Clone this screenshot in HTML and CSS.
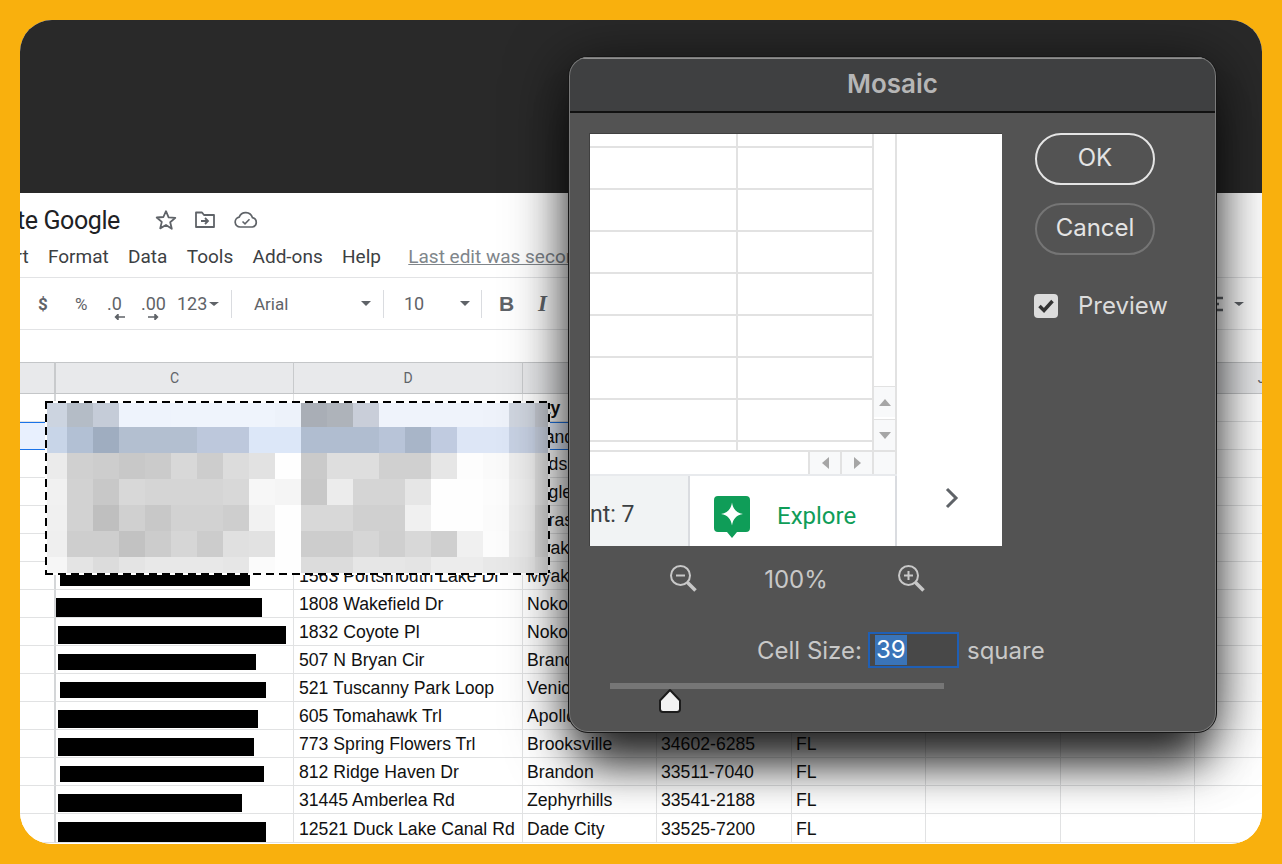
FILE: index.html
```html
<!DOCTYPE html>
<html lang="en">
<head>
    <meta charset="UTF-8">
    <title>Mosaic</title>
    <link rel="stylesheet" href="styles.css">
</head>
<body>
    <div class="app">
        <div class="top-band"></div>

        <div class="sheet">
            <div class="title-row">
                <span class="doc-title">te Google</span>
                <svg class="title-icon star" width="24" height="24" viewBox="0 0 24 24"><path d="M12 3.2l2.6 6.2 6.7.5-5.1 4.4 1.6 6.5L12 17.000l-5.800 3.400 1.600-6.500-5.100-4.400 6.700-.5z" fill="none" stroke="#5f6368" stroke-width="1.800" stroke-linejoin="round"/></svg>
                <svg class="title-icon folder" width="24" height="24" viewBox="0 0 24 24"><path d="M3 19V4.500h6l2 2.500h10v12z" fill="none" stroke="#5f6368" stroke-width="1.800" stroke-linejoin="round"/><path d="M8 13h6.500M12 10l3 3-3 3" fill="none" stroke="#5f6368" stroke-width="1.800"/></svg>
                <svg class="title-icon cloud" width="26" height="24" viewBox="0 0 26 24"><path d="M7 19a5 5 0 0 1-.8-9.900A7 7 0 0 1 19.400 9.600 4.800 4.800 0 0 1 19.500 19z" fill="none" stroke="#5f6368" stroke-width="1.700"/><path d="M9.500 13.500l2.500 2.300 4.500-4.500" fill="none" stroke="#5f6368" stroke-width="1.600"/></svg>
            </div>

            <div class="menu-row">
                <span class="menu-cut">Insert</span>
                <span>Format</span>
                <span>Data</span>
                <span>Tools</span>
                <span>Add-ons</span>
                <span>Help</span>
                <span class="last-edit">Last edit was seconds ago</span>
            </div>

            <div class="toolbar">
                <span class="tool tool-dollar">$</span>
                <span class="tool tool-percent">%</span>
                <span class="tool tool-dec">.0<svg width="12" height="6" viewBox="0 0 12 6"><path d="M11 3H2M4 .5L1.500 3 4 5.500z" stroke="#5f6368" stroke-width="1.500" fill="#5f6368"/></svg></span>
                <span class="tool tool-inc">.00<svg width="12" height="6" viewBox="0 0 12 6"><path d="M1 3h9M8 .5L10.500 3 8 5.500z" stroke="#5f6368" stroke-width="1.500" fill="#5f6368"/></svg></span>
                <span class="tool tool-num">123<i class="caret caret-small"></i></span>
                <i class="divider"></i>
                <span class="tool tool-font">Arial<i class="caret"></i></span>
                <i class="divider"></i>
                <span class="tool tool-size">10<i class="caret"></i></span>
                <i class="divider"></i>
                <span class="tool tool-bold">B</span>
                <span class="tool tool-italic">I</span>
                <span class="tool tool-align">
                    <svg width="16" height="18" viewBox="0 0 16 18"><path d="M0 3h16M0 9h12M0 15h16" stroke="#5f6368" stroke-width="2.500"/></svg>
                    <i class="caret caret-small"></i>
                </span>
            </div>

            <div class="formula-bar"></div>

            <table class="grid">
                <colgroup>
                    <col class="col-rows">
                    <col class="col-c">
                    <col class="col-d">
                    <col class="col-e">
                    <col class="col-f">
                    <col class="col-g">
                    <col class="col-h">
                    <col class="col-i">
                    <col class="col-j">
                </colgroup>
                <thead>
                    <tr><th></th><th>C</th><th>D</th><th>E</th><th>F</th><th>G</th><th>H</th><th>I</th><th>J</th></tr>
                </thead>
                <tbody>
                    <tr><td></td><td></td><td></td><td><b>City</b></td><td></td><td></td><td></td><td></td><td></td></tr>
                    <tr class="selected"><td></td><td></td><td></td><td>Brandon</td><td></td><td></td><td></td><td></td><td></td></tr>
                    <tr><td></td><td></td><td></td><td>Eads</td><td></td><td></td><td></td><td></td><td></td></tr>
                    <tr><td></td><td></td><td></td><td>Eagle</td><td></td><td></td><td></td><td></td><td></td></tr>
                    <tr><td></td><td></td><td></td><td>Sarasota</td><td></td><td></td><td></td><td></td><td></td></tr>
                    <tr><td></td><td></td><td></td><td>Myakka City</td><td></td><td></td><td></td><td></td><td></td></tr>
                    <tr><td></td><td class="hidden-name"><span class="redact" style="margin:12px 0 0 4px;width:190px;height:12px"></span></td><td>1563 Portsmouth Lake Dr</td><td>Myakka City</td><td></td><td></td><td></td><td></td><td></td></tr>
                    <tr><td></td><td class="hidden-name"><span class="redact" style="margin:8px 0 0 0;width:206px;height:19px"></span></td><td>1808 Wakefield Dr</td><td>Nokomis</td><td></td><td></td><td></td><td></td><td></td></tr>
                    <tr><td></td><td class="hidden-name"><span class="redact" style="margin:8px 0 0 2px;width:228px;height:18px"></span></td><td>1832 Coyote Pl</td><td>Nokomis</td><td></td><td></td><td></td><td></td><td></td></tr>
                    <tr><td></td><td class="hidden-name"><span class="redact" style="margin:8px 0 0 2px;width:198px;height:16px"></span></td><td>507 N Bryan Cir</td><td>Brandon</td><td></td><td></td><td></td><td></td><td></td></tr>
                    <tr><td></td><td class="hidden-name"><span class="redact" style="margin:8px 0 0 4px;width:206px;height:16px"></span></td><td>521 Tuscanny Park Loop</td><td>Venice</td><td></td><td></td><td></td><td></td><td></td></tr>
                    <tr><td></td><td class="hidden-name"><span class="redact" style="margin:8px 0 0 2px;width:200px;height:18px"></span></td><td>605 Tomahawk Trl</td><td>Apollo Beach</td><td></td><td></td><td></td><td></td><td></td></tr>
                    <tr><td></td><td class="hidden-name"><span class="redact" style="margin:8px 0 0 2px;width:196px;height:18px"></span></td><td>773 Spring Flowers Trl</td><td>Brooksville</td><td>34602-6285</td><td>FL</td><td></td><td></td><td></td></tr>
                    <tr><td></td><td class="hidden-name"><span class="redact" style="margin:8px 0 0 4px;width:204px;height:16px"></span></td><td>812 Ridge Haven Dr</td><td>Brandon</td><td>33511-7040</td><td>FL</td><td></td><td></td><td></td></tr>
                    <tr><td></td><td class="hidden-name"><span class="redact" style="margin:8px 0 0 2px;width:184px;height:18px"></span></td><td>31445 Amberlea Rd</td><td>Zephyrhills</td><td>33541-2188</td><td>FL</td><td></td><td></td><td></td></tr>
                    <tr><td></td><td class="hidden-name"><span class="redact" style="margin:8px 0 0 2px;width:208px;height:20px"></span></td><td>12521 Duck Lake Canal Rd</td><td>Dade City</td><td>33525-7200</td><td>FL</td><td></td><td></td><td></td></tr>
                </tbody>
            </table>
        </div>

        <div class="mosaic" id="mosaic"></div>

        <div class="dialog">
            <div class="dialog-title">Mosaic</div>
            <div class="dialog-body">
                <div class="dialog-left">
                    <div class="preview">
                        <div class="preview-sheet">
                            <div class="preview-top">
                                <div class="preview-cells"></div>
                                <div class="vscroll">
                                    <div class="scroll-btn"><i class="tri tri-up"></i></div>
                                    <div class="scroll-btn"><i class="tri tri-down"></i></div>
                                </div>
                            </div>
                            <div class="hscroll">
                                <div class="hscroll-btn"><i class="tri tri-left"></i></div>
                                <div class="hscroll-btn"><i class="tri tri-right"></i></div>
                                <div class="hscroll-corner"></div>
                            </div>
                            <div class="preview-tabs">
                                <div class="tab-count"><span>nt: 7</span></div>
                                <div class="tab-explore">
                                    <svg width="36" height="42" viewBox="0 0 36 42"><path d="M4 0h28a4 4 0 0 1 4 4v28a4 4 0 0 1-4 4h-9l-5 6-5-6H4a4 4 0 0 1-4-4V4a4 4 0 0 1 4-4z" fill="#0f9d58"/><path d="M18 6.500c1 6.500 4.500 10.500 11 11.500-6.500 1-10 5-11 11.500-1-6.500-4.500-10.500-11-11.500 6.500-1 10-5 11-11.500z" fill="#fff"/></svg>
                                    <span>Explore</span>
                                </div>
                            </div>
                        </div>
                        <div class="preview-side">
                            <svg width="16" height="22" viewBox="0 0 16 22"><path d="M3 2l9 9-9 9" fill="none" stroke="#5f6368" stroke-width="3"/></svg>
                        </div>
                    </div>

                    <div class="zoom-row">
                        <svg width="30" height="30" viewBox="0 0 30 30"><circle cx="11.500" cy="11.500" r="9.500" fill="none" stroke="#c8c8c8" stroke-width="2"/><path d="M7 11.500h9" stroke="#c8c8c8" stroke-width="2"/><path d="M18.500 18.500l8 8" stroke="#c8c8c8" stroke-width="3.500"/></svg>
                        <span>100%</span>
                        <svg width="30" height="30" viewBox="0 0 30 30"><circle cx="11.500" cy="11.500" r="9.500" fill="none" stroke="#c8c8c8" stroke-width="2"/><path d="M7 11.500h9M11.500 7v9" stroke="#c8c8c8" stroke-width="2"/><path d="M18.500 18.500l8 8" stroke="#c8c8c8" stroke-width="3.500"/></svg>
                    </div>

                    <div class="cell-row">
                        <label>Cell Size:</label>
                        <div class="cell-input"><span>39</span></div>
                        <span>square</span>
                    </div>

                    <div class="slider">
                        <div class="slider-track"></div>
                        <svg class="slider-thumb" width="26" height="26" viewBox="0 0 26 26"><path d="M13 2L23 12.500V21a3 3 0 0 1-3 3H6a3 3 0 0 1-3-3V12.500z" fill="#f2f2f2" stroke="#1c1c1c" stroke-width="2" stroke-linejoin="round"/></svg>
                    </div>
                </div>

                <div class="dialog-right">
                    <button class="btn btn-ok">OK</button>
                    <button class="btn btn-cancel">Cancel</button>
                    <div class="preview-check">
                        <span class="checkbox">
                            <svg width="18" height="16" viewBox="0 0 18 16"><path d="M2.500 8l4.500 4.500L15.500 3" fill="none" stroke="#333" stroke-width="3.500"/></svg>
                        </span>
                        <span>Preview</span>
                    </div>
                </div>
            </div>
        </div>
    </div>

    <script src="script.js"></script>
</body>
</html>
```

FILE: styles.css
```css
* {
    box-sizing: border-box;
    margin: 0;
    padding: 0;
}

html, body {
    width: 1282px;
    height: 864px;
    overflow: hidden;
}

body {
    padding: 20px;
    background-color: #f9b00d;
    font-family: Roboto, sans-serif;
}

.app {
    position: relative;
    height: 824px;
    border-radius: 32px;
    overflow: hidden;
    background-color: #fff;
}

.top-band {
    height: 173px;
    background-color: #292929;
}

/* spreadsheet behind the dialog */

.sheet {
    height: 651px;
    overflow: hidden;
    background-color: #fff;
}

.title-row {
    display: flex;
    align-items: center;
    height: 50px;
    padding-top: 4px;
}

.doc-title {
    width: 135px;
    margin-left: -3px;
    font-size: 25px;
    letter-spacing: -0.4px;
    color: #202124;
}

.title-icon {
    flex: none;
}

.doc-title + .title-icon {
    margin-left: 2px;
}

.star {
    margin-right: 15px;
}

.folder {
    margin-right: 16px;
}

.menu-row {
    display: flex;
    align-items: center;
    gap: 19.300px;
    height: 34px;
    padding-bottom: 8px;
    font-size: 19px;
    color: #3c4043;
    white-space: nowrap;
}

.menu-cut {
    margin-left: -40px;
}

.last-edit {
    margin-left: 8px;
    color: #80868b;
    text-decoration: underline;
}

.toolbar {
    display: flex;
    align-items: center;
    height: 53px;
    padding-right: 18px;
    border-top: 1px solid #e2e3e5;
    border-bottom: 1px solid #e2e3e5;
    color: #5f6368;
    font-size: 17px;
}

.tool {
    display: flex;
    align-items: center;
    height: 24px;
    flex: none;
}

.tool-dollar {
    width: 44px;
    padding-left: 18px;
    font-weight: 700;
}

.tool-percent {
    width: 36px;
    padding-left: 11px;
}

.tool-dec,
.tool-inc {
    position: relative;
    font-size: 18px;
}

.tool-dec {
    width: 33px;
    padding-left: 7px;
}

.tool-inc {
    width: 43px;
    padding-left: 8px;
}

.tool-dec svg,
.tool-inc svg {
    position: absolute;
    top: 22px;
    left: 14px;
}

.tool-num {
    width: 55px;
    padding-left: 1px;
    font-size: 18px;
}

.divider {
    flex: none;
    width: 1px;
    height: 28px;
    background-color: #dadce0;
}

.caret {
    display: block;
    flex: none;
    margin-left: auto;
    border-top: 5px solid #5f6368;
    border-left: 5.500px solid transparent;
    border-right: 5.500px solid transparent;
}

.caret-small {
    margin-left: 2px;
    border-top-width: 4px;
    border-left-width: 5px;
    border-right-width: 5px;
}

.tool-font {
    width: 151px;
    padding: 0 12px 0 22px;
}

.tool-size {
    width: 97px;
    padding: 0 11px 0 20px;
    font-size: 18px;
}

.tool-bold {
    width: 42px;
    padding-left: 17px;
    font-family: "Liberation Sans", sans-serif;
    font-size: 21px;
    font-weight: 700;
}

.tool-italic {
    width: 20px;
    padding-left: 14px;
    font-family: "Liberation Serif", serif;
    font-size: 23px;
    font-style: italic;
    font-weight: 700;
}

.tool-align {
    gap: 9px;
    margin-left: auto;
}

.formula-bar {
    height: 32px;
}

.grid {
    border-collapse: separate;
    border-spacing: 0;
    table-layout: fixed;
    width: 1309px;
    font-family: "Liberation Sans", sans-serif;
    font-size: 17.650px;
    color: #111;
}

.col-rows { width: 36px; }
.col-c { width: 238px; }
.col-d { width: 229px; }
.col-e { width: 134px; }
.col-f { width: 135px; }
.col-g { width: 134px; }
.col-h { width: 135px; }
.col-i { width: 134px; }
.col-j { width: 134px; }

.grid th {
    height: 32px;
    font-family: Roboto, sans-serif;
    font-size: 14px;
    font-weight: 400;
    color: #5f6368;
    background-color: #e8e9eb;
    border-top: 1px solid #c4c6c8;
    border-right: 1px solid #c8cacc;
    border-bottom: 1px solid #c4c6c8;
}

.grid th:first-child {
    border-right-width: 2px;
}

.grid td {
    height: 28px;
    padding: 2px 3px 0 4px;
    border-right: 1px solid #e1e2e3;
    border-bottom: 1px solid #e1e2e3;
    white-space: nowrap;
    overflow: hidden;
    vertical-align: middle;
}

.grid td:nth-child(3) {
    padding-left: 5px;
}

.grid td:first-child {
    border-right: 2px solid #d4d6d8;
    padding: 0;
}

.grid td.hidden-name {
    padding: 0;
    vertical-align: top;
}

.grid .selected td:nth-child(-n+6) {
    background-color: #e8f0fe;
    border-top: 1px solid #1a73e8;
    border-bottom: 1px solid #1a73e8;
}

.redact {
    display: block;
    background-color: #000;
}

/* pixelated selection */

.mosaic {
    position: absolute;
    top: 381px;
    left: 25px;
    display: grid;
    grid-template-columns: 22px repeat(18, 26px) 15px;
    grid-template-rows: 26px 26px 26px 26px 26px 26px 18px;
    width: 505px;
    height: 174px;
}

.mosaic::after {
    content: "";
    position: absolute;
    inset: 0;
    background:
        repeating-linear-gradient(90deg, #000 0 8px, #fff 8px 13px) top / 100% 2px no-repeat,
        repeating-linear-gradient(90deg, #000 0 8px, #fff 8px 13px) bottom / 100% 2px no-repeat,
        repeating-linear-gradient(180deg, #000 0 8px, #fff 8px 13px) left / 2px 100% no-repeat,
        repeating-linear-gradient(180deg, #000 0 8px, #fff 8px 13px) right / 2px 100% no-repeat;
}

/* dialog */

.dialog {
    position: absolute;
    top: 36px;
    left: 548px;
    width: 649px;
    height: 677px;
    border: 1px solid #161616;
    border-radius: 20px;
    overflow: hidden;
    background-color: #535353;
    box-shadow: 0 10px 60px rgba(0, 0, 0, 0.7), 0 45px 45px -15px rgba(0, 0, 0, 0.7);
    font-family: Inter, sans-serif;
    color: #d2d2d2;
}

.dialog::after {
    content: "";
    position: absolute;
    inset: 0;
    border-radius: 19px;
    box-shadow: inset 0 0 0 1px #7a7a7a;
}

.dialog-title {
    height: 56px;
    border-top: 2px solid #8f8f8f;
    border-bottom: 2px solid #111;
    background-color: #3f4041;
    text-align: center;
    font-size: 26px;
    font-weight: 600;
    line-height: 50px;
    color: #b6b6b6;
}

.dialog-body {
    display: flex;
    padding: 20px 0 0 20px;
}

.dialog-left {
    width: 413px;
    flex: none;
}

.preview {
    display: flex;
    width: 413px;
    height: 413px;
    border-top: 1px solid #404040;
    border-left: 1px solid #404040;
    background-color: #fff;
}

.preview-sheet {
    display: flex;
    flex-direction: column;
    width: 307px;
    height: 412px;
    flex: none;
}

.preview-top {
    display: flex;
    height: 316px;
    flex: none;
}

.preview-cells {
    width: 282px;
    background:
        linear-gradient(#e2e2e2, #e2e2e2) 146px 0 / 2px 100% no-repeat,
        repeating-linear-gradient(180deg, #e2e2e2 0 2px, #fff 2px 42px) 0 12px / 100% 100% no-repeat;
}

.vscroll {
    display: flex;
    flex-direction: column;
    justify-content: flex-end;
    gap: 2px;
    width: 25px;
    border-left: 2px solid #e2e2e2;
    border-right: 2px solid #e2e2e2;
}

.scroll-btn {
    display: flex;
    align-items: center;
    justify-content: center;
    height: 31px;
    border-top: 1px solid #e2e2e2;
    background-color: #f8f9fa;
}

.tri {
    display: block;
    width: 0;
    height: 0;
    border: 6px solid transparent;
}

.tri-up {
    margin-top: -6px;
    border-bottom: 7px solid #a6a6a6;
}

.tri-down {
    margin-top: 6px;
    border-top: 7px solid #a6a6a6;
}

.tri-left {
    margin-left: -6px;
    border-right: 7px solid #a6a6a6;
}

.tri-right {
    margin-left: 6px;
    border-left: 7px solid #a6a6a6;
}

.hscroll {
    display: flex;
    justify-content: flex-end;
    height: 26px;
    flex: none;
    border-top: 2px solid #e2e2e2;
    border-bottom: 2px solid #e8eaed;
}

.hscroll-btn {
    display: flex;
    align-items: center;
    justify-content: center;
    width: 32px;
    border-left: 2px solid #e2e2e2;
    background-color: #f8f9fa;
}

.hscroll-corner {
    width: 25px;
    border-left: 2px solid #e2e2e2;
    border-right: 2px solid #e2e2e2;
    background-color: #f8f9fa;
}

.preview-tabs {
    display: flex;
    flex: 1;
}

.tab-count {
    display: flex;
    align-items: center;
    width: 100px;
    flex: none;
    padding-top: 6px;
    overflow: hidden;
    background-color: #f1f3f4;
    border-right: 2px solid #dadce0;
    font-family: Roboto, sans-serif;
    font-size: 23px;
    color: #3c4043;
    white-space: nowrap;
}

.tab-explore {
    display: flex;
    align-items: flex-start;
    gap: 27px;
    width: 207px;
    padding: 20px 0 0 24px;
    border-right: 2px solid #dadce0;
    font-family: Roboto, sans-serif;
    font-size: 24px;
    color: #0f9d58;
}

.tab-explore span {
    margin-top: 6px;
}

.preview-side {
    flex: 1;
    padding: 353px 0 0 47px;
}

.zoom-row {
    display: flex;
    align-items: center;
    justify-content: space-between;
    width: 258px;
    height: 30px;
    margin: 18px 0 0 80px;
    font-size: 24px;
    color: #c8c8c8;
}

.zoom-row span {
    margin-right: 4px;
}

.cell-row {
    display: flex;
    align-items: center;
    height: 36px;
    margin: 38px 0 0 168px;
    font-size: 24px;
    color: #c8c8c8;
    white-space: nowrap;
}

.cell-row label {
    width: 111px;
    flex: none;
}

.cell-input {
    display: flex;
    align-items: center;
    flex: none;
    width: 91px;
    height: 36px;
    margin-right: 8px;
    padding-left: 5px;
    border: 2px solid #1f5fb5;
    background-color: #484848;
    color: #fff;
}

.cell-input span {
    line-height: 30px;
    padding: 0 1px;
    background-color: #3a74b8;
}

.slider {
    position: relative;
    height: 30px;
    margin: 15px 0 0 21px;
}

.slider-track {
    width: 334px;
    height: 6px;
    background-color: #767676;
}

.slider-thumb {
    position: absolute;
    top: 5px;
    left: 47px;
}

.dialog-right {
    display: flex;
    flex-direction: column;
    margin-left: 33px;
}

.btn {
    width: 120px;
    height: 52px;
    padding-bottom: 4px;
    border-radius: 26px;
    background: transparent;
    font-family: Inter, sans-serif;
    font-size: 24px;
    color: #e4e4e4;
}

.btn-ok {
    border: 2px solid #e4e4e4;
}

.btn-cancel {
    margin-top: 18px;
    border: 2px solid #757575;
}

.preview-check {
    display: flex;
    align-items: center;
    gap: 20px;
    margin: 36px 0 0 -1px;
    font-size: 24px;
    color: #dcdcdc;
}

.checkbox {
    display: flex;
    align-items: center;
    justify-content: center;
    width: 24px;
    height: 24px;
    border-radius: 4px;
    background-color: #dcdcdc;
}
```

FILE: script.js
```js
// mosaic cell colours, row by row
const mosaicRows = [
    ['ccd4e0','b4bcc6','c5ccd8','eef3fc','eef3fc','eff4fc','eff4fc','eff4fc','eff4fc','edf2fa','a9aeb6','aeb3ba','c9ced9','eff3fb','eff3fb','eff3fb','eff3fb','eef2fa','d0d6e0','c4c8d0'],
    ['c8d5e8','b2c0d4','9fadc0','b3bfd0','b3bfd0','b3bfd0','bdc8dc','bdc8dc','dce7f8','dce7f8','b0bdd0','b0bdd0','b0bdd0','b8c4d8','a8b5c8','c0cbe0','dde6f6','dde6f6','c8d2e4','c5cddc'],
    ['ebebeb','d0d0d0','cdcdcd','c8c8c8','cbcbcb','d8d8d8','cdcdcd','dcdcdc','e2e2e2','fefefe','cacaca','dedede','dedede','d0d0d0','d0d0d0','e6e6e6','fdfdfd','fafafa','eeeeee','e0e0e0'],
    ['f1f1f1','d2d2d2','c8c8c8','d8d8d8','d5d5d5','d5d5d5','d5d5d5','d8d8d8','f7f7f7','f5f5f5','c8c8c8','ececec','d5d5d5','d5d5d5','e6e6e6','fefefe','fefefe','fcfcfc','f0f0f0','e0e0e0'],
    ['f0f0f0','d2d2d2','bfbfbf','d0d0d0','c8c8c8','d2d2d2','d2d2d2','cecece','f2f2f2','fefefe','d8d8d8','d8d8d8','d0d0d0','d0d0d0','f0f0f0','fefefe','fefefe','fbfbfb','eeeeee','d8d8d8'],
    ['efefef','cecece','cecece','c2c2c2','cccccc','d6d6d6','cccccc','e0e0e0','e2e2e2','fefefe','cdcdcd','cdcdcd','d6d6d6','cfcfcf','d8d8d8','cfcfcf','f0f0f0','fcfcfc','ececec','d8d8d8'],
    ['f6f6f6','e4e4e4','dcdcdc','e4e4e4','e8e8e8','e8e8e8','e8e8e8','e6e6e6','fbfbfb','fefefe','dcdcdc','dcdcdc','e6e6e6','e6e6e6','e4e4e4','ececec','ececec','e8e8e8','e8e8e8','e0e0e0']
];

const mosaic = document.getElementById('mosaic');

mosaicRows.forEach(row => {
    row.forEach(colour => {
        const cell = document.createElement('div');
        cell.style.background = '#' + colour;
        mosaic.appendChild(cell);
    });
});
```
